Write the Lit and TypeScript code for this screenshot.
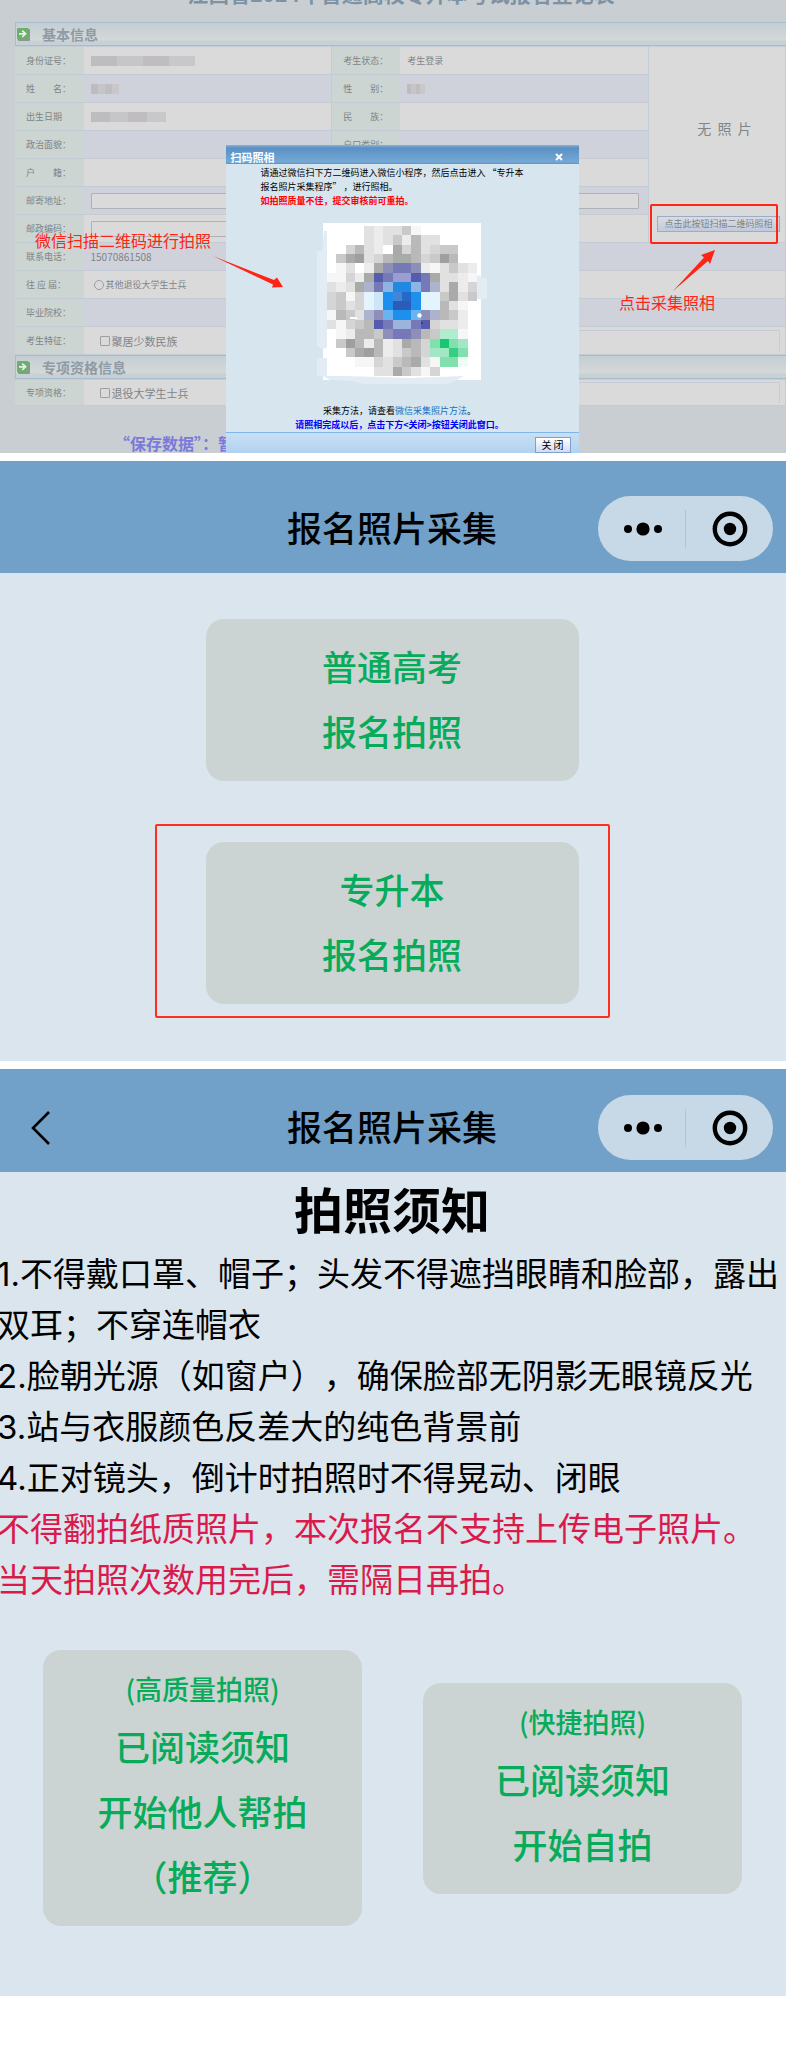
import { LitElement, html, svg, css } from "lit";
import { customElement, property } from "lit/decorators.js";

const CELL = 9.4;

const PALETTE: Record<string, string> = {
  x: "#9f9f9f", a: "#a9aba9", b: "#b9b9b9", c: "#c9c9c9", d: "#d5d5d5", e: "#e1e1e1", f: "#ececec", g: "#f6f6f6",
  P: "#555bad", p: "#7579b8", q: "#8d8fb9", l: "#9a9dd0", n: "#adb3cc",
  B: "#1c90ec", C: "#2388e0", D: "#4486d6", E: "#2468c8", F: "#2a5cb8",
  H: "#6cb2ec", I: "#8eb4e4", J: "#9cb3dc", K: "#e4f4fc", L: "#cce6f8",
  G: "#18c870", M: "#36cf82", N: "#82dfae", O: "#a2e7c5", Q: "#b0ecd0", R: "#eefcf4",
};

const MOSAIC = [
  "....efeecg......",
  "....efecfbee....",
  "..dbef.adbedcc..",
  ".caxedbaabdcxb..",
  ".ge.faqppqfgecef",
  "ggdfaPpllPpaeefg",
  "efeanpICCIpneafd",
  "dcgdKLBDEBKKcaec",
  "dcedKLBFFBKKbeg.",
  "gbcenqHBBHqnbcf.",
  "egdcbPpJJpPdeef.",
  ".gfbbcqppqbcQQg.",
  ".cxbfbfeabdNGNO.",
  "..caxbfecbdOOMN.",
  "...ggdecbaegNNR.",
  ".....eeacegd....",
];

@customElement("code-mosaic")
class CodeMosaic extends LitElement {
  static styles = css`
    :host { display: block; }
    svg { display: block; }
  `;
  render() {
    const cells = MOSAIC.flatMap((row, y) =>
      [...row].map((k, x) =>
        PALETTE[k]
          ? svg`<rect x=${16.7 + x * CELL} y=${15.7 + y * CELL} width="9.5" height="9.5" fill=${PALETTE[k]} shape-rendering="crispEdges"></rect>`
          : null
      )
    );
    return html`
      <svg width="190" height="180" viewBox="0 0 190 180" role="img" aria-label="二维码">
        <rect x="13" y="13" width="158" height="157" fill="#fff"></rect>
        <path d="M7 41H12L14 21H17V138L12 139L7 136ZM7 148H17V166H36L100 168L154 166L145 171L138 174H52L44 171L20 170L13 166H7ZM163 65H167L177 69V89H163Z" fill="#e3ecf4"></path>
        ${cells}
        <circle cx="109.5" cy="105.5" r="2.2" fill="#fff"></circle>
        <path d="M40 107h5l4 2h-9z" fill="#fff"></path>
        <circle cx="112" cy="113" r="1" fill="#30309a"></circle>
      </svg>
    `;
  }
}

@customElement("mini-header")
class MiniHeader extends LitElement {
  @property({ type: Boolean }) back = false;
  static styles = css`
    :host { display: block; background: #71a0c8; }
    .bar {
      display: grid;
      grid-template-columns: 1fr auto 1fr;
      align-items: center;
      padding: 0 13px 12px 28px;
    }
    .title { margin: 0; font-size: 35px; line-height: 61px; font-weight: 500; color: #000; padding: 0 17px 4px 0; }
    .capsule {
      justify-self: end;
      display: flex;
      align-items: center;
      width: 175px;
      height: 65px;
      border-radius: 33px;
      background: #c7d8e7;
    }
    button { border: 0; padding: 0; background: none; color: #000; display: flex; align-items: center; justify-content: center; }
    .capsule button { flex: 1; height: 100%; }
    .sep { width: 1px; height: 38px; background: #b2c4d4; }
    svg { display: block; }
  `;
  render() {
    return html`
      <div class="bar">
        <div>
          ${this.back
            ? html`<button aria-label="返回">
                <svg width="26" height="36" viewBox="0 0 26 36"><path d="M21 2 5 18 21 34" fill="none" stroke="#000" stroke-width="2.6"></path></svg>
              </button>`
            : null}
        </div>
        <h2 class="title">报名照片采集</h2>
        <div class="capsule">
          <button aria-label="更多">
            <svg width="40" height="14" viewBox="0 0 40 14"><circle cx="6" cy="7" r="4"></circle><circle cx="21" cy="7" r="6.6"></circle><circle cx="36" cy="7" r="4"></circle></svg>
          </button>
          <span class="sep"></span>
          <button aria-label="关闭">
            <svg width="36" height="36" viewBox="0 0 36 36"><circle cx="18" cy="18" r="15.2" fill="none" stroke="#000" stroke-width="4.4"></circle><circle cx="18" cy="18" r="6.2"></circle></svg>
          </button>
        </div>
      </div>
    `;
  }
}

@customElement("app-root")
class AppRoot extends LitElement {
  static styles = css`
    :host {
      display: block;
      background: #fff;
      font-family: "Noto Sans CJK SC", sans-serif;
      color: #000;
    }
    * { box-sizing: border-box; }
    button, input { font-family: inherit; }
    .page { display: flex; flex-direction: column; gap: 8px; }

    .register { position: relative; overflow: hidden; background: #c8ced2; color: #7f8486; padding-left: 15px; font-size: 9px; }
    .register h1 { margin: -19px 0 16px 1px; font-size: 21px; line-height: 25px; text-align: center; color: #7d92a3; white-space: nowrap; }
    .bar {
      display: flex;
      align-items: center;
      gap: 12px;
      height: 24px;
      padding-left: 1px;
      border: 1px solid #a9bccc;
      border-right: 0;
      background: linear-gradient(#c3ced4, #d4d8d7 75%, #c6d0d5 85%);
    }
    .bar h2 { margin: 0; font-size: 14px; line-height: 20px; color: #8e9ba6; }
    table { width: 100%; border-collapse: collapse; table-layout: fixed; }
    .main tr { height: 28px; }
    .special { height: 27px; }
    .c-label { width: 68px; }
    .c-photo { width: 137px; }
    th, td { padding: 0; border: 1px solid #c3ccd5; border-width: 1px 1px 1px 0; line-height: 14px; text-align: left; white-space: nowrap; }
    th { padding-left: 11px; font-weight: 400; background: #ccd5d2; border-right-color: #cfd4d8; }
    td { padding-left: 7px; background: #dadada; }
    .alt td { background: #cfd2db; }
    .alt .photo, .photo { padding: 0 5px 0 8px; background: #dadada; }
    .photo-inner { display: flex; flex-direction: column; height: 194px; padding-bottom: 10px; }
    .nophoto { flex: 1; display: flex; align-items: center; justify-content: center; padding: 0 0 8px 12px; font-size: 14px; }
    .scan { height: 16px; padding: 0; border: 1px solid #9cabc6; background: linear-gradient(#dadce0, #c0cade); color: #7f8486; font-size: 9px; line-height: 14px; }
    .blur { display: block; height: 10px; background: linear-gradient(90deg, #bdbdbf 0 25%, #c6c6c8 25% 50%, #bfbdbf 50% 75%, #c8c8ca 75%); }
    .w-id { width: 104px; }
    .w-name { width: 28px; }
    .w-birth { width: 75px; }
    .w-sex { width: 18px; }
    .text { display: block; width: calc(100% - 9px); height: 16px; padding: 0 4px; border: 1px solid #aeb2b5; border-radius: 1px; background: #dadada; font-size: 9px; }
    .text.zip { width: 150px; }
    .num { font-size: 10px; }
    .pick { display: flex; align-items: center; gap: 2px; }
    .choice { display: flex; align-items: center; gap: 2px; padding-left: 3px; }
    .big { font-size: 11px; padding-left: 9px; }
    .choice input { appearance: none; width: 10px; height: 10px; margin: 0; border: 1px solid #9b9fa2; border-radius: 1px; }
    .choice input[type="radio"] { border-radius: 50%; }
    .rule { flex: 1; height: 21px; margin: 0 5px 0 100px; border: 1px solid #c5ccd8; border-width: 1px 1px 0 0; }
    .tip { margin: 27px 0 0 99px; font-size: 16px; line-height: 20px; font-weight: 700; color: #7b79da; white-space: nowrap; }

    .mask { position: absolute; inset: 145px 0 0 18px; display: flex; justify-content: center; }
    .dialog { display: flex; flex-direction: column; width: 353px; background: #d7e5ee; color: #000; }
    .dialog header { display: flex; align-items: center; justify-content: space-between; height: 19px; padding: 4px 14px 0 5px; background: linear-gradient(#8ab4da, #5a91c3 15%, #74a8d5 90%, #5e93c2); color: #fff; }
    .dialog h3 { margin: 0; font-size: 11px; line-height: 14px; }
    .x { width: 12px; height: 12px; padding: 0; border: 0; background: none; display: flex; align-items: center; justify-content: center; }
    .intro { margin: 2px 0 0; padding-left: 35px; line-height: 14px; }
    .warn { color: #f00; font-weight: 700; }
    .dialog code-mosaic { margin: 2px 0 0 84px; }
    .after { flex: 1; margin: 14px 0 0; padding-right: 5px; line-height: 14px; text-align: center; }
    .after a { color: #1670c4; text-decoration: none; }
    .done { color: #00f; font-weight: 700; }
    .dialog footer { display: flex; justify-content: flex-end; height: 21px; padding: 4px 8px 0; border-top: 1px solid #7eb6ec; background: linear-gradient(#c9dff4, #b2d2ef); }
    .close { width: 36px; height: 16px; padding: 0; border: 1px solid #7f9fd0; background: linear-gradient(#fff, #cfdcf5); color: #000; font-size: 10px; line-height: 12px; }

    .note { position: absolute; color: #ff2414; font-size: 16px; line-height: 20px; white-space: nowrap; }
    .note-scan { left: 35px; top: 230px; }
    .note-take { right: 71px; top: 292px; }
    .arrow { position: absolute; display: block; }
    .arrow-scan { left: 212px; top: 256px; }
    .arrow-take { right: 70px; top: 249px; }
    .mark { position: absolute; right: 8px; top: 204px; width: 128px; height: 40px; border: 2px solid #ff2414; border-radius: 2px; }

    .phone { background: #dbe5ee; }
    .home-head { padding-top: 35px; }
    .notice-head { padding-top: 26px; }
    .menu { display: flex; flex-direction: column; align-items: center; gap: 43px; padding: 46px 2px 43px 0; }
    .card { display: flex; flex-direction: column; align-items: center; padding: 14px 0 18px; border: 0; border-radius: 18px; background: #ccd4d3; color: #08ab5a; font-size: 35px; line-height: 65px; font-weight: 500; }
    .menu .card { width: 373px; }
    .framed { width: 455px; display: flex; justify-content: center; padding: 16px 0 12px 20px; border: 2px solid #ff2e1e; border-radius: 2px; margin-right: 20px; }
    .small { font-size: 27px; line-height: 49px; }
    .phone h1 { margin: 0; font-size: 49px; line-height: 71px; text-align: center; padding: 0 2px 6px 0; }
    .rules { margin: 0 0 0 -3px; font-family: Inter, "Noto Sans CJK SC", sans-serif; font-size: 33px; line-height: 51px; text-spacing-trim: space-all; }
    .rules p { margin: 0; }
    .red { color: #d91a4a; }
    .actions { display: flex; align-items: center; gap: 61px; padding: 44px 44px 70px 43px; }
    .actions .card { flex: 1; }
  `;

  private bar(title: string) {
    return html`<div class="bar">
      <svg width="13" height="13" viewBox="0 0 13 13">
        <rect x="1" y="1" width="12" height="12" rx="1" fill="#8d9691"></rect>
        <rect width="11.5" height="11.5" rx="1" fill="#6cae6b"></rect>
        <path d="M2 5.8h6M5.2 2.6 8.6 5.8 5.2 9" fill="none" stroke="#e8efe8" stroke-width="1.7"></path>
      </svg>
      <h2>${title}</h2>
    </div>`;
  }

  render() {
    return html`
      <main class="page">
        <section class="register">
          <h1>江西省2024年普通高校专升本考试报名登记表</h1>
          ${this.bar("基本信息")}
          <table class="main">
            <colgroup><col class="c-label" /><col /><col class="c-label" /><col /><col class="c-photo" /></colgroup>
            <tr>
              <th>身份证号：</th><td><span class="blur w-id"></span></td>
              <th>考生状态：</th><td>考生登录</td>
              <td class="photo" rowspan="7">
                <div class="photo-inner">
                  <div class="nophoto">无&nbsp;&nbsp;照&nbsp;&nbsp;片</div>
                  <button class="scan">点击此按钮扫描二维码照相</button>
                </div>
              </td>
            </tr>
            <tr class="alt"><th>姓　　名：</th><td><span class="blur w-name"></span></td><th>性　　别：</th><td><span class="blur w-sex"></span></td></tr>
            <tr><th>出生日期</th><td><span class="blur w-birth"></span></td><th>民　　族：</th><td></td></tr>
            <tr class="alt"><th>政治面貌：</th><td></td><th>户口类别：</th><td></td></tr>
            <tr><th>户　　籍：</th><td colspan="3"></td></tr>
            <tr class="alt"><th><label for="addr">邮寄地址：</label></th><td colspan="3"><input id="addr" class="text" /></td></tr>
            <tr><th><label for="zip">邮政编码：</label></th><td colspan="3"><input id="zip" class="text zip" /></td></tr>
            <tr class="alt"><th>联系电话：</th><td class="num" colspan="4">15070861508</td></tr>
            <tr><th>往 应 届：</th><td colspan="4"><label class="choice"><input type="radio" name="grad" />其他退役大学生士兵</label></td></tr>
            <tr class="alt"><th>毕业院校：</th><td colspan="4"></td></tr>
            <tr><th>考生特征：</th><td colspan="4"><div class="pick"><label class="choice big"><input type="checkbox" />聚居少数民族</label><span class="rule"></span></div></td></tr>
          </table>
          ${this.bar("专项资格信息")}
          <table class="special">
            <colgroup><col class="c-label" /><col /></colgroup>
            <tr><th>专项资格：</th><td><div class="pick"><label class="choice big"><input type="checkbox" />退役大学生士兵</label><span class="rule"></span></div></td></tr>
          </table>
          <p class="tip">“保存数据”：暂</p>

          <div class="mask">
            <div class="dialog" role="dialog" aria-label="扫码照相">
              <header>
                <h3>扫码照相</h3>
                <button class="x" aria-label="关闭"><svg width="8" height="8" viewBox="0 0 8 8"><path d="M1 1 7 7M7 1 1 7" stroke="#fff" stroke-width="2"></path></svg></button>
              </header>
              <p class="intro">
                请通过微信扫下方二维码进入微信小程序，然后点击进入 “专升本<br />报名照片采集程序” ，进行照相。<br />
                <span class="warn">如拍照质量不佳，提交审核前可重拍。</span>
              </p>
              <code-mosaic></code-mosaic>
              <p class="after">
                采集方法，请查看<a href="#">微信采集照片方法</a>。<br />
                <span class="done">请照相完成以后，点击下方&lt;关闭&gt;按钮关闭此窗口。</span>
              </p>
              <footer><button class="close">关 闭</button></footer>
            </div>
          </div>

          <span class="mark"></span>
          <span class="note note-scan">微信扫描二维码进行拍照</span>
          <svg class="arrow arrow-scan" width="72" height="34" viewBox="0 0 72 34"><path d="M1 0 62 24 65 21.500 71 31 60 31.500 61 28.500Z" fill="#ff2414"></path></svg>
          <span class="note note-take">点击采集照相</span>
          <svg class="arrow arrow-take" width="44" height="43" viewBox="0 0 44 43"><path d="M1 42 32 8.500 29 6 43 1 38 15 36 12Z" fill="#ff2414"></path></svg>
        </section>

        <section class="phone">
          <mini-header class="home-head"></mini-header>
          <div class="menu">
            <button class="card"><span>普通高考</span><span>报名拍照</span></button>
            <div class="framed">
              <button class="card"><span>专升本</span><span>报名拍照</span></button>
            </div>
          </div>
        </section>

        <section class="phone">
          <mini-header class="notice-head" back></mini-header>
          <h1>拍照须知</h1>
          <div class="rules">
            <p>1.不得戴口罩、帽子；头发不得遮挡眼睛和脸部，露出双耳；不穿连帽衣</p>
            <p>2.脸朝光源（如窗户），确保脸部无阴影无眼镜反光</p>
            <p>3.站与衣服颜色反差大的纯色背景前</p>
            <p>4.正对镜头，倒计时拍照时不得晃动、闭眼</p>
            <p class="red">不得翻拍纸质照片，本次报名不支持上传电子照片。</p>
            <p class="red">当天拍照次数用完后，需隔日再拍。</p>
          </div>
          <div class="actions">
            <button class="card"><span class="small">(高质量拍照)</span><span>已阅读须知</span><span>开始他人帮拍</span><span>（推荐）</span></button>
            <button class="card"><span class="small">(快捷拍照)</span><span>已阅读须知</span><span>开始自拍</span></button>
          </div>
        </section>
      </main>
    `;
  }
}
